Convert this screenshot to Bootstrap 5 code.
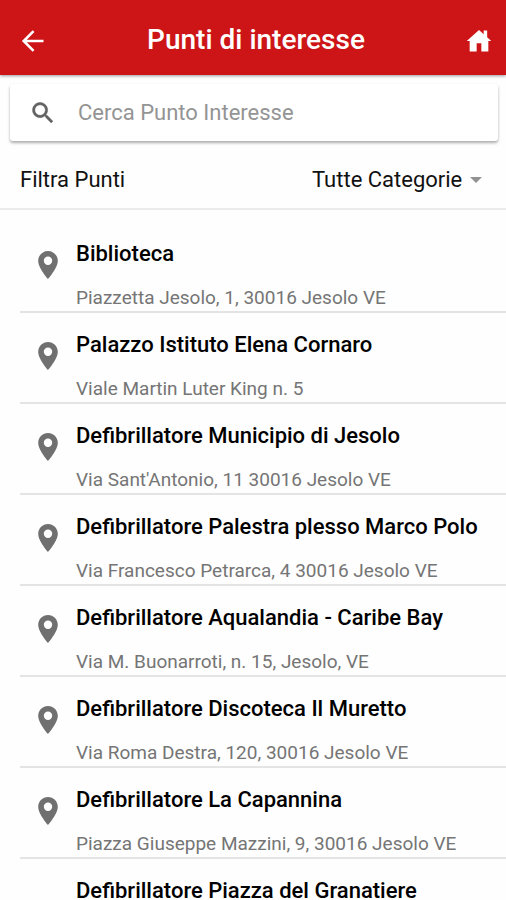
<!DOCTYPE html>
<html lang="it">
<head>
<meta charset="utf-8">
<meta name="viewport" content="width=device-width, initial-scale=1">
<title>Punti di interesse</title>
<link href="https://cdn.jsdelivr.net/npm/bootstrap@5.3.0/dist/css/bootstrap.min.css" rel="stylesheet">
<style>
body { font-family: Roboto, "Liberation Sans", sans-serif; background: #fefefe; color: #111; }
.app-bar { background: #cd1517; height: 75px; padding: 6px 13px 0 19px; box-shadow: 0 1px 3px rgba(0,0,0,.4); }
.app-bar h1 { font-size: 28px; line-height: 32px; font-weight: 500; padding-bottom: 2px; }
.app-bar a { line-height: 0; }
.search-box { height: 57px; margin: 9px 8px 0 10px; padding: 0 19px; border-radius: 3px; box-shadow: 0 2px 3px rgba(0,0,0,.32); }
.search-box input { font-size: 22px; line-height: 28px; color: #333; outline: 0; margin-left: 21px; }
.search-box input::placeholder { color: #949494; opacity: 1; }
.filter-bar { height: 69px; padding: 10px 24px 0 20px; border-bottom: 2px solid #ebebeb; font-size: 22px; line-height: 28px; }
.filter-bar select { appearance: none; color: #111; padding: 0 19px 0 0; }
.filter-arrow { right: 0; pointer-events: none; }
.place-list { padding: 12px 0 0 20px; scrollbar-width: none; }
.place { height: 91px; padding: 18px 0 0 56px; border-bottom: 2px solid #e4e4e4; gap: 16px; }
.place:has(svg) { padding-left: 16px; }
.place svg { margin-top: 11px; }
.place h2 { font-size: 22px; line-height: 28px; font-weight: 500; color: #000; margin-bottom: 18px; }
.place p { font-size: 19px; line-height: 24px; color: #757575; }
</style>
</head>
<body>
<div class="vh-100 d-flex flex-column overflow-hidden">
  <header class="app-bar d-flex align-items-center justify-content-between flex-shrink-0">
    <a href="#" aria-label="Indietro"><svg width="28" height="28" viewBox="0 0 24 24" fill="none" stroke="#fff" stroke-width="2.2"><path d="M21 12H4.500M12.500 3.500 4 12l8.500 8.500"/></svg></a>
    <h1 class="text-white mb-0">Punti di interesse</h1>
    <a href="#" aria-label="Home"><svg width="28" height="28" viewBox="0 0 24 24" fill="#fff"><path d="M10 21v-7h4v7h6v-9h2.500L19 8.800V3h-3v3.200L12 2.500 1.500 12H4v9z"/></svg></a>
  </header>
  <form class="search-box bg-white d-flex align-items-center flex-shrink-0" role="search">
    <label for="search" aria-label="Cerca"><svg width="28" height="28" viewBox="0 0 24 24" fill="#616161" stroke="#616161" stroke-width=".4"><path d="M15.500 14h-.79l-.28-.27A6.500 6.500 0 1 0 13.730 14.430l.27.280v.79l5 4.990L20.490 19zm-6 0a4.500 4.500 0 1 1 0-9 4.500 4.500 0 0 1 0 9z"/></svg></label>
    <input id="search" type="text" class="border-0 bg-transparent p-0 flex-grow-1" placeholder="Cerca Punto Interesse">
  </form>
  <div class="filter-bar d-flex align-items-center justify-content-between flex-shrink-0">
    <label for="category">Filtra Punti</label>
    <div class="position-relative d-flex align-items-center">
      <select id="category" class="border-0 bg-transparent"><option>Tutte Categorie</option></select>
      <svg class="filter-arrow position-absolute" width="12" height="6" viewBox="0 0 12 6" fill="#929292"><path d="M0 0h12L6 6z"/></svg>
    </div>
  </div>
  <main class="place-list flex-grow-1 overflow-auto">
    <div class="d-none"><svg><symbol id="pin" viewBox="5 2 14 20"><path fill="#707070" fill-rule="evenodd" d="M12 2C8.130 2 5 5.130 5 9c0 5.250 7 13 7 13s7-7.750 7-13c0-3.870-3.130-7-7-7zm0 10a3 3 0 1 1 0-6 3 3 0 0 1 0 6z"/></symbol></svg></div>
    <article class="place d-flex"><svg class="flex-shrink-0" width="24" height="28"><use href="#pin"/></svg><div><h2>Biblioteca</h2><p class="mb-0">Piazzetta Jesolo, 1, 30016 Jesolo VE</p></div></article>
    <article class="place d-flex"><svg class="flex-shrink-0" width="24" height="28"><use href="#pin"/></svg><div><h2>Palazzo Istituto Elena Cornaro</h2><p class="mb-0">Viale Martin Luter King n. 5</p></div></article>
    <article class="place d-flex"><svg class="flex-shrink-0" width="24" height="28"><use href="#pin"/></svg><div><h2>Defibrillatore Municipio di Jesolo</h2><p class="mb-0">Via Sant'Antonio, 11 30016 Jesolo VE</p></div></article>
    <article class="place d-flex"><svg class="flex-shrink-0" width="24" height="28"><use href="#pin"/></svg><div><h2>Defibrillatore Palestra plesso Marco Polo</h2><p class="mb-0">Via Francesco Petrarca, 4 30016 Jesolo VE</p></div></article>
    <article class="place d-flex"><svg class="flex-shrink-0" width="24" height="28"><use href="#pin"/></svg><div><h2>Defibrillatore Aqualandia - Caribe Bay</h2><p class="mb-0">Via M. Buonarroti, n. 15, Jesolo, VE</p></div></article>
    <article class="place d-flex"><svg class="flex-shrink-0" width="24" height="28"><use href="#pin"/></svg><div><h2>Defibrillatore Discoteca Il Muretto</h2><p class="mb-0">Via Roma Destra, 120, 30016 Jesolo VE</p></div></article>
    <article class="place d-flex"><svg class="flex-shrink-0" width="24" height="28"><use href="#pin"/></svg><div><h2>Defibrillatore La Capannina</h2><p class="mb-0">Piazza Giuseppe Mazzini, 9, 30016 Jesolo VE</p></div></article>
    <article class="place d-flex"><div><h2>Defibrillatore Piazza del Granatiere</h2></div></article>
  </main>
</div>
<script src="https://cdn.jsdelivr.net/npm/bootstrap@5.3.0/dist/js/bootstrap.bundle.min.js"></script>
</body>
</html>
